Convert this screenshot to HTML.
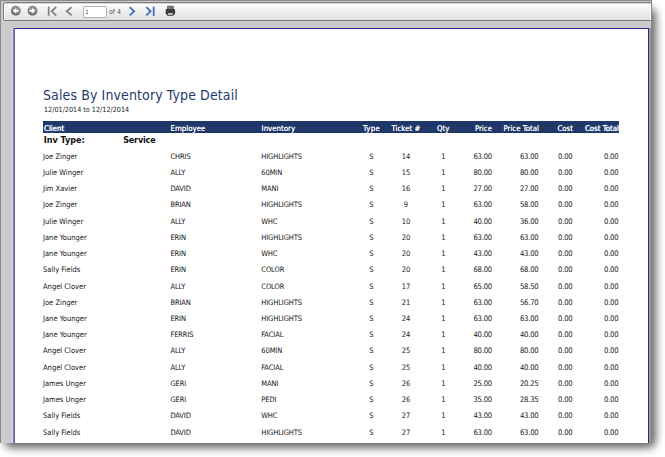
<!DOCTYPE html><html><head><meta charset="utf-8"><title>Sales By Inventory Type Detail</title><style>
html,body{margin:0;padding:0;background:#fff;}
body{width:665px;height:457px;overflow:hidden;position:relative;font-family:"DejaVu Sans Condensed","Liberation Sans",sans-serif;}
#frame{position:absolute;left:0;top:0;width:652px;height:443px;background:#cbcbcb;overflow:hidden;}
#sh{position:absolute;left:3.5px;top:8px;width:652px;height:439.5px;border-radius:8px;background:rgba(0,0,0,.6);filter:blur(4.2px);}
#frame:before{content:"";position:absolute;left:0;top:0;bottom:0;width:1px;background:#8a8a8a;}
#frame:after{content:"";position:absolute;left:651px;top:0;bottom:0;width:1px;background:#868686;}
#topline{position:absolute;left:0;top:0;width:652px;height:1px;background:#8c8c8c;}
#tb{position:absolute;left:3px;top:2px;width:647px;height:17px;border:1px solid #7a7a7a;border-radius:2px 0 0 2px;box-shadow:inset 0 1px 0 rgba(120,120,120,.3),inset 1px 0 0 #fff,inset -1px 0 0 #fff,inset 0 2px 0 #fff;background:linear-gradient(#ffffff 0,#f4f4f4 30%,#e0e0e0 100%);}
#ico{position:absolute;left:0;top:0;}
#rs{position:absolute;left:649px;top:28px;width:3px;height:420px;background:linear-gradient(to right,#9e9e9a,#868686);}
#pg{position:absolute;left:83px;top:6px;width:22px;height:10px;border:1px solid #b2b2b2;border-radius:2px;background:#fff;}
#pgn{left:85.2px;top:9.3px;font-size:6px;color:#444;}
#of{left:109px;top:9.2px;font-size:7px;color:#555;}
#page{position:absolute;left:14px;top:28px;width:633px;height:500px;border:1px solid #2b2b9b;border-left:1px solid #6464be;box-shadow:-1px 0 0 #7a7aba,-2px 0 0 #dfdfd2;background:#fff;}
.t{position:absolute;white-space:nowrap;line-height:1;}
#title{left:43px;top:88.2px;font-size:14px;letter-spacing:.11px;color:#1f3a70;}
#date{left:44px;top:106px;font-size:7.2px;color:#222;}
#hdr{position:absolute;left:43px;top:121px;width:576px;height:12px;background:#1f3769;}
.h{color:#fff;font-size:7.8px;top:124.9px;text-shadow:0 0 .4px #fff;}
.hl{text-shadow:0 0 1.5px #9cc4ff,0 0 .4px #fff;}
.g{font-weight:bold;font-size:9px;color:#111;top:135.7px;}
.c{font-size:7.5px;color:#151515;}
.n{font-size:7.6px;letter-spacing:-.2px;}
.u{letter-spacing:-.12px;}
.r{text-align:right;}
.m{text-align:center;}
</style></head><body>
<div id="sh"></div><div id="frame"><div id="topline"></div><div id="tb"></div><svg id="ico" width="652" height="22" viewBox="0 0 652 22"><defs><linearGradient id="cg" x1="0" y1="0" x2="0" y2="1"><stop offset="0" stop-color="#8a8a8a"/><stop offset="1" stop-color="#5a5a5a"/></linearGradient><linearGradient id="cf" x1="0" y1="0" x2="0" y2="1"><stop offset="0" stop-color="#a0a0a0"/><stop offset="1" stop-color="#7a7a7a"/></linearGradient></defs><circle cx="15.75" cy="10.7" r="4.3" fill="url(#cf)" stroke="url(#cg)" stroke-width="1.2"/><path d="M12.9 10.7 L16.2 7.9 L16.2 9.7 L18.8 9.7 L18.8 11.7 L16.2 11.7 L16.2 13.5 Z" fill="#fff"/><circle cx="32.5" cy="10.7" r="4.3" fill="url(#cf)" stroke="url(#cg)" stroke-width="1.2"/><path d="M35.4 10.7 L32.1 7.9 L32.1 9.7 L29.5 9.7 L29.5 11.7 L32.1 11.7 L32.1 13.5 Z" fill="#fff"/><g fill="none" stroke="#858585" stroke-width="1.8"><path d="M48.7 6.6 V15.8"/><path d="M56.2 7 L51.6 11.3 L56.2 15.5"/><path d="M71.6 7.2 L66.6 11.3 L71.6 15.3"/></g><g fill="none" stroke="#3a6cc6" stroke-width="1.8"><path d="M129.7 7.2 L134.1 11.3 L129.7 15.4"/><path d="M146.3 7.2 L150.6 11.3 L146.3 15.4"/><path d="M153.7 6.6 V15.8"/></g><g><rect x="167.6" y="6.2" width="5.6" height="3.4" fill="#7a7a7a" stroke="#555" stroke-width=".8"/><rect x="165.7" y="9" width="9.4" height="5.4" rx="1" fill="#3c3c3c"/><rect x="167.2" y="12.6" width="6.4" height="3.2" fill="#444"/><rect x="168" y="13.3" width="4.8" height="1.3" fill="#f4f4f4"/></g></svg><div id="pg"></div><div class="t" id="pgn">1</div><div class="t" id="of">of 4</div><div id="page"></div><div id="rs"></div>
<div class="t" id="title">Sales By Inventory Type Detail</div>
<div class="t" id="date">12/01/2014 to 12/12/2014</div>
<div id="hdr"></div>
<div class="t h hl" style="left:44px;">Client</div>
<div class="t h" style="left:170.6px;">Employee</div>
<div class="t h" style="left:261.6px;">Inventory</div>
<div class="t h" style="left:363px;letter-spacing:.3px;">Type</div>
<div class="t h" style="left:391.5px;">Ticket #</div>
<div class="t h" style="left:437px;">Qty</div>
<div class="t h r" style="right:160px;">Price</div>
<div class="t h r" style="right:113px;">Price Total</div>
<div class="t h r" style="right:79px;">Cost</div>
<div class="t h hl r" style="right:33px;">Cost Total</div>
<div class="t g" style="left:43.7px;">Inv Type:</div>
<div class="t g" style="left:123.2px;letter-spacing:-.2px;">Service</div>
<div class="t c" style="left:43px;top:152.7px;">Joe Zinger</div>
<div class="t c u" style="left:170.4px;top:152.7px;">CHRIS</div>
<div class="t c u" style="left:261.3px;top:152.7px;">HIGHLIGHTS</div>
<div class="t c m" style="left:341.5px;width:60px;top:152.7px;">S</div>
<div class="t c m" style="left:376px;width:60px;top:152.7px;">14</div>
<div class="t c m" style="left:413.5px;width:60px;top:152.7px;">1</div>
<div class="t c n r" style="right:160px;top:152.7px;">63.00</div>
<div class="t c n r" style="right:113.5px;top:152.7px;">63.00</div>
<div class="t c n r" style="right:79.5px;top:152.7px;">0.00</div>
<div class="t c n r" style="right:33.60000000000002px;top:152.7px;">0.00</div>
<div class="t c" style="left:43px;top:168.93px;">Julie Winger</div>
<div class="t c u" style="left:170.4px;top:168.93px;">ALLY</div>
<div class="t c u" style="left:261.3px;top:168.93px;">60MIN</div>
<div class="t c m" style="left:341.5px;width:60px;top:168.93px;">S</div>
<div class="t c m" style="left:376px;width:60px;top:168.93px;">15</div>
<div class="t c m" style="left:413.5px;width:60px;top:168.93px;">1</div>
<div class="t c n r" style="right:160px;top:168.93px;">80.00</div>
<div class="t c n r" style="right:113.5px;top:168.93px;">80.00</div>
<div class="t c n r" style="right:79.5px;top:168.93px;">0.00</div>
<div class="t c n r" style="right:33.60000000000002px;top:168.93px;">0.00</div>
<div class="t c" style="left:43px;top:185.16px;">Jim Xavier</div>
<div class="t c u" style="left:170.4px;top:185.16px;">DAVID</div>
<div class="t c u" style="left:261.3px;top:185.16px;">MANI</div>
<div class="t c m" style="left:341.5px;width:60px;top:185.16px;">S</div>
<div class="t c m" style="left:376px;width:60px;top:185.16px;">16</div>
<div class="t c m" style="left:413.5px;width:60px;top:185.16px;">1</div>
<div class="t c n r" style="right:160px;top:185.16px;">27.00</div>
<div class="t c n r" style="right:113.5px;top:185.16px;">27.00</div>
<div class="t c n r" style="right:79.5px;top:185.16px;">0.00</div>
<div class="t c n r" style="right:33.60000000000002px;top:185.16px;">0.00</div>
<div class="t c" style="left:43px;top:201.39px;">Joe Zinger</div>
<div class="t c u" style="left:170.4px;top:201.39px;">BRIAN</div>
<div class="t c u" style="left:261.3px;top:201.39px;">HIGHLIGHTS</div>
<div class="t c m" style="left:341.5px;width:60px;top:201.39px;">S</div>
<div class="t c m" style="left:376px;width:60px;top:201.39px;">9</div>
<div class="t c m" style="left:413.5px;width:60px;top:201.39px;">1</div>
<div class="t c n r" style="right:160px;top:201.39px;">63.00</div>
<div class="t c n r" style="right:113.5px;top:201.39px;">58.00</div>
<div class="t c n r" style="right:79.5px;top:201.39px;">0.00</div>
<div class="t c n r" style="right:33.60000000000002px;top:201.39px;">0.00</div>
<div class="t c" style="left:43px;top:217.62px;">Julie Winger</div>
<div class="t c u" style="left:170.4px;top:217.62px;">ALLY</div>
<div class="t c u" style="left:261.3px;top:217.62px;">WHC</div>
<div class="t c m" style="left:341.5px;width:60px;top:217.62px;">S</div>
<div class="t c m" style="left:376px;width:60px;top:217.62px;">10</div>
<div class="t c m" style="left:413.5px;width:60px;top:217.62px;">1</div>
<div class="t c n r" style="right:160px;top:217.62px;">40.00</div>
<div class="t c n r" style="right:113.5px;top:217.62px;">36.00</div>
<div class="t c n r" style="right:79.5px;top:217.62px;">0.00</div>
<div class="t c n r" style="right:33.60000000000002px;top:217.62px;">0.00</div>
<div class="t c" style="left:43px;top:233.85px;">Jane Younger</div>
<div class="t c u" style="left:170.4px;top:233.85px;">ERIN</div>
<div class="t c u" style="left:261.3px;top:233.85px;">HIGHLIGHTS</div>
<div class="t c m" style="left:341.5px;width:60px;top:233.85px;">S</div>
<div class="t c m" style="left:376px;width:60px;top:233.85px;">20</div>
<div class="t c m" style="left:413.5px;width:60px;top:233.85px;">1</div>
<div class="t c n r" style="right:160px;top:233.85px;">63.00</div>
<div class="t c n r" style="right:113.5px;top:233.85px;">63.00</div>
<div class="t c n r" style="right:79.5px;top:233.85px;">0.00</div>
<div class="t c n r" style="right:33.60000000000002px;top:233.85px;">0.00</div>
<div class="t c" style="left:43px;top:250.08px;">Jane Younger</div>
<div class="t c u" style="left:170.4px;top:250.08px;">ERIN</div>
<div class="t c u" style="left:261.3px;top:250.08px;">WHC</div>
<div class="t c m" style="left:341.5px;width:60px;top:250.08px;">S</div>
<div class="t c m" style="left:376px;width:60px;top:250.08px;">20</div>
<div class="t c m" style="left:413.5px;width:60px;top:250.08px;">1</div>
<div class="t c n r" style="right:160px;top:250.08px;">43.00</div>
<div class="t c n r" style="right:113.5px;top:250.08px;">43.00</div>
<div class="t c n r" style="right:79.5px;top:250.08px;">0.00</div>
<div class="t c n r" style="right:33.60000000000002px;top:250.08px;">0.00</div>
<div class="t c" style="left:43px;top:266.31px;">Sally Fields</div>
<div class="t c u" style="left:170.4px;top:266.31px;">ERIN</div>
<div class="t c u" style="left:261.3px;top:266.31px;">COLOR</div>
<div class="t c m" style="left:341.5px;width:60px;top:266.31px;">S</div>
<div class="t c m" style="left:376px;width:60px;top:266.31px;">20</div>
<div class="t c m" style="left:413.5px;width:60px;top:266.31px;">1</div>
<div class="t c n r" style="right:160px;top:266.31px;">68.00</div>
<div class="t c n r" style="right:113.5px;top:266.31px;">68.00</div>
<div class="t c n r" style="right:79.5px;top:266.31px;">0.00</div>
<div class="t c n r" style="right:33.60000000000002px;top:266.31px;">0.00</div>
<div class="t c" style="left:43px;top:282.54px;">Angel Clover</div>
<div class="t c u" style="left:170.4px;top:282.54px;">ALLY</div>
<div class="t c u" style="left:261.3px;top:282.54px;">COLOR</div>
<div class="t c m" style="left:341.5px;width:60px;top:282.54px;">S</div>
<div class="t c m" style="left:376px;width:60px;top:282.54px;">17</div>
<div class="t c m" style="left:413.5px;width:60px;top:282.54px;">1</div>
<div class="t c n r" style="right:160px;top:282.54px;">65.00</div>
<div class="t c n r" style="right:113.5px;top:282.54px;">58.50</div>
<div class="t c n r" style="right:79.5px;top:282.54px;">0.00</div>
<div class="t c n r" style="right:33.60000000000002px;top:282.54px;">0.00</div>
<div class="t c" style="left:43px;top:298.77px;">Joe Zinger</div>
<div class="t c u" style="left:170.4px;top:298.77px;">BRIAN</div>
<div class="t c u" style="left:261.3px;top:298.77px;">HIGHLIGHTS</div>
<div class="t c m" style="left:341.5px;width:60px;top:298.77px;">S</div>
<div class="t c m" style="left:376px;width:60px;top:298.77px;">21</div>
<div class="t c m" style="left:413.5px;width:60px;top:298.77px;">1</div>
<div class="t c n r" style="right:160px;top:298.77px;">63.00</div>
<div class="t c n r" style="right:113.5px;top:298.77px;">56.70</div>
<div class="t c n r" style="right:79.5px;top:298.77px;">0.00</div>
<div class="t c n r" style="right:33.60000000000002px;top:298.77px;">0.00</div>
<div class="t c" style="left:43px;top:315.0px;">Jane Younger</div>
<div class="t c u" style="left:170.4px;top:315.0px;">ERIN</div>
<div class="t c u" style="left:261.3px;top:315.0px;">HIGHLIGHTS</div>
<div class="t c m" style="left:341.5px;width:60px;top:315.0px;">S</div>
<div class="t c m" style="left:376px;width:60px;top:315.0px;">24</div>
<div class="t c m" style="left:413.5px;width:60px;top:315.0px;">1</div>
<div class="t c n r" style="right:160px;top:315.0px;">63.00</div>
<div class="t c n r" style="right:113.5px;top:315.0px;">63.00</div>
<div class="t c n r" style="right:79.5px;top:315.0px;">0.00</div>
<div class="t c n r" style="right:33.60000000000002px;top:315.0px;">0.00</div>
<div class="t c" style="left:43px;top:331.23px;">Jane Younger</div>
<div class="t c u" style="left:170.4px;top:331.23px;">FERRIS</div>
<div class="t c u" style="left:261.3px;top:331.23px;">FACIAL</div>
<div class="t c m" style="left:341.5px;width:60px;top:331.23px;">S</div>
<div class="t c m" style="left:376px;width:60px;top:331.23px;">24</div>
<div class="t c m" style="left:413.5px;width:60px;top:331.23px;">1</div>
<div class="t c n r" style="right:160px;top:331.23px;">40.00</div>
<div class="t c n r" style="right:113.5px;top:331.23px;">40.00</div>
<div class="t c n r" style="right:79.5px;top:331.23px;">0.00</div>
<div class="t c n r" style="right:33.60000000000002px;top:331.23px;">0.00</div>
<div class="t c" style="left:43px;top:347.46px;">Angel Clover</div>
<div class="t c u" style="left:170.4px;top:347.46px;">ALLY</div>
<div class="t c u" style="left:261.3px;top:347.46px;">60MIN</div>
<div class="t c m" style="left:341.5px;width:60px;top:347.46px;">S</div>
<div class="t c m" style="left:376px;width:60px;top:347.46px;">25</div>
<div class="t c m" style="left:413.5px;width:60px;top:347.46px;">1</div>
<div class="t c n r" style="right:160px;top:347.46px;">80.00</div>
<div class="t c n r" style="right:113.5px;top:347.46px;">80.00</div>
<div class="t c n r" style="right:79.5px;top:347.46px;">0.00</div>
<div class="t c n r" style="right:33.60000000000002px;top:347.46px;">0.00</div>
<div class="t c" style="left:43px;top:363.69px;">Angel Clover</div>
<div class="t c u" style="left:170.4px;top:363.69px;">ALLY</div>
<div class="t c u" style="left:261.3px;top:363.69px;">FACIAL</div>
<div class="t c m" style="left:341.5px;width:60px;top:363.69px;">S</div>
<div class="t c m" style="left:376px;width:60px;top:363.69px;">25</div>
<div class="t c m" style="left:413.5px;width:60px;top:363.69px;">1</div>
<div class="t c n r" style="right:160px;top:363.69px;">40.00</div>
<div class="t c n r" style="right:113.5px;top:363.69px;">40.00</div>
<div class="t c n r" style="right:79.5px;top:363.69px;">0.00</div>
<div class="t c n r" style="right:33.60000000000002px;top:363.69px;">0.00</div>
<div class="t c" style="left:43px;top:379.92px;">James Unger</div>
<div class="t c u" style="left:170.4px;top:379.92px;">GERI</div>
<div class="t c u" style="left:261.3px;top:379.92px;">MANI</div>
<div class="t c m" style="left:341.5px;width:60px;top:379.92px;">S</div>
<div class="t c m" style="left:376px;width:60px;top:379.92px;">26</div>
<div class="t c m" style="left:413.5px;width:60px;top:379.92px;">1</div>
<div class="t c n r" style="right:160px;top:379.92px;">25.00</div>
<div class="t c n r" style="right:113.5px;top:379.92px;">20.25</div>
<div class="t c n r" style="right:79.5px;top:379.92px;">0.00</div>
<div class="t c n r" style="right:33.60000000000002px;top:379.92px;">0.00</div>
<div class="t c" style="left:43px;top:396.15px;">James Unger</div>
<div class="t c u" style="left:170.4px;top:396.15px;">GERI</div>
<div class="t c u" style="left:261.3px;top:396.15px;">PEDI</div>
<div class="t c m" style="left:341.5px;width:60px;top:396.15px;">S</div>
<div class="t c m" style="left:376px;width:60px;top:396.15px;">26</div>
<div class="t c m" style="left:413.5px;width:60px;top:396.15px;">1</div>
<div class="t c n r" style="right:160px;top:396.15px;">35.00</div>
<div class="t c n r" style="right:113.5px;top:396.15px;">28.35</div>
<div class="t c n r" style="right:79.5px;top:396.15px;">0.00</div>
<div class="t c n r" style="right:33.60000000000002px;top:396.15px;">0.00</div>
<div class="t c" style="left:43px;top:412.38px;">Sally Fields</div>
<div class="t c u" style="left:170.4px;top:412.38px;">DAVID</div>
<div class="t c u" style="left:261.3px;top:412.38px;">WHC</div>
<div class="t c m" style="left:341.5px;width:60px;top:412.38px;">S</div>
<div class="t c m" style="left:376px;width:60px;top:412.38px;">27</div>
<div class="t c m" style="left:413.5px;width:60px;top:412.38px;">1</div>
<div class="t c n r" style="right:160px;top:412.38px;">43.00</div>
<div class="t c n r" style="right:113.5px;top:412.38px;">43.00</div>
<div class="t c n r" style="right:79.5px;top:412.38px;">0.00</div>
<div class="t c n r" style="right:33.60000000000002px;top:412.38px;">0.00</div>
<div class="t c" style="left:43px;top:428.61px;">Sally Fields</div>
<div class="t c u" style="left:170.4px;top:428.61px;">DAVID</div>
<div class="t c u" style="left:261.3px;top:428.61px;">HIGHLIGHTS</div>
<div class="t c m" style="left:341.5px;width:60px;top:428.61px;">S</div>
<div class="t c m" style="left:376px;width:60px;top:428.61px;">27</div>
<div class="t c m" style="left:413.5px;width:60px;top:428.61px;">1</div>
<div class="t c n r" style="right:160px;top:428.61px;">63.00</div>
<div class="t c n r" style="right:113.5px;top:428.61px;">63.00</div>
<div class="t c n r" style="right:79.5px;top:428.61px;">0.00</div>
<div class="t c n r" style="right:33.60000000000002px;top:428.61px;">0.00</div>
</div></body></html>
